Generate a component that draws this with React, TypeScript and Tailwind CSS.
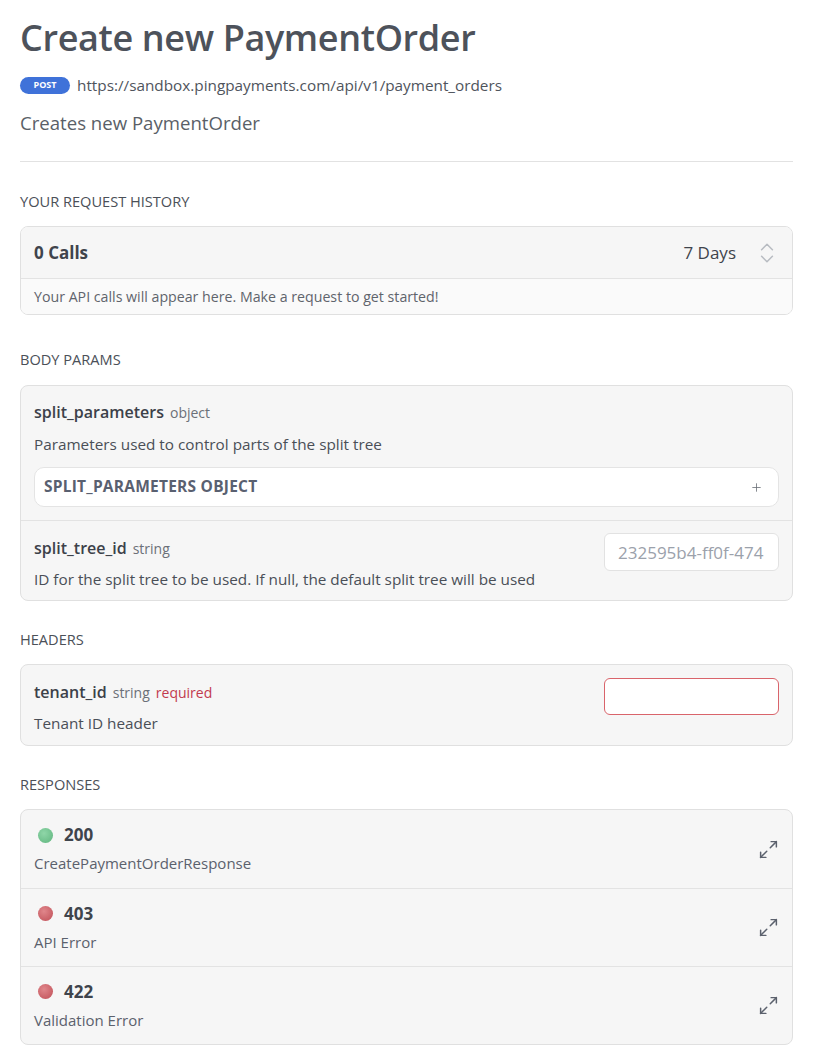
import { ChevronsUpDown, Maximize2, Plus } from 'lucide-react'

const RESPONSES = [
  { code: '200', label: 'CreatePaymentOrderResponse', ok: true },
  { code: '403', label: 'API Error', ok: false },
  { code: '422', label: 'Validation Error', ok: false },
]

function SectionTitle({ children }: { children: string }) {
  return <h2 className="text-[14.6px] leading-[20px] font-medium uppercase text-[#4b5058]">{children}</h2>
}

export default function App() {
  return (
    <div className="ml-5 w-[773px] pt-[14px] pb-4 font-['Open_Sans',sans-serif] text-[#3e434b]">
      {/* Heading */}
      <h1 className="text-[36px] font-semibold leading-[48px] tracking-[-0.01em] text-[#4d525b]">Create new PaymentOrder</h1>
      <div className="mt-[12px] flex items-center gap-[7px]">
        <span className="flex h-[17px] w-[50px] items-center justify-center rounded-full bg-[#3f72d9] text-[9px] font-bold text-white">
          POST
        </span>
        <span className="text-[15.3px] leading-[22px] text-[#4f545c]">https://sandbox.pingpayments.com/api/v1/payment_orders</span>
      </div>
      <p className="mt-[14px] text-[18.6px] leading-[26px] text-[#5a5f67]">Creates new PaymentOrder</p>
      <hr className="mt-[25px] border-[#e2e2e2]" />

      {/* Request history */}
      <div className="mt-[29px]">
        <SectionTitle>Your Request History</SectionTitle>
        <div className="mt-[15px] overflow-hidden rounded-lg border border-[#e0e0e0]">
          <div className="flex h-[51px] items-center justify-between bg-[#f6f6f6] pl-[13px] pr-[12px]">
            <span className="text-[17px] font-bold text-[#3f444c]">0 Calls</span>
            <div className="flex items-center gap-[18px]">
              <span className="text-[17px] text-[#3f444c]">7 Days</span>
              <ChevronsUpDown size={26} strokeWidth={1.4} className="text-[#b8bcc2]" />
            </div>
          </div>
          <div className="flex h-[36px] items-center border-t border-[#e3e3e3] bg-[#fafafa] px-[13px] text-[14.2px] text-[#5f646c]">
            Your API calls will appear here. Make a request to get started!
          </div>
        </div>
      </div>

      {/* Body params */}
      <div className="mt-[34px]">
        <SectionTitle>Body Params</SectionTitle>
        <div className="mt-[16px] overflow-hidden rounded-lg border border-[#e0e0e0] bg-[#f6f6f6]">
          <div className="px-[13px] pt-[15px] pb-[13px]">
            <div className="flex items-baseline gap-[6px] leading-[22px]">
              <span className="text-[16px] font-semibold text-[#3c4149]">split_parameters</span>
              <span className="text-[14px] text-[#6b7078]">object</span>
            </div>
            <p className="mt-[9px] text-[15.3px] leading-[22px] text-[#4a4f57]">Parameters used to control parts of the split tree</p>
            <div className="mt-[12px] flex h-[40px] items-center justify-between rounded-[10px] border border-[#e4e4e4] bg-white pl-[9px] pr-[15px]">
              <span className="text-[15.5px] font-bold uppercase tracking-[0.015em] text-[#596070]">split_parameters object</span>
              <Plus size={13} strokeWidth={1.5} className="text-[#6b7078]" />
            </div>
          </div>
          <div className="flex items-start justify-between border-t border-[#e3e3e3] pt-[12px] pb-[10px] pl-[13px] pr-[13px]">
            <div className="pt-[4px]">
              <div className="flex items-baseline gap-[6px] leading-[22px]">
                <span className="text-[16px] font-semibold text-[#3c4149]">split_tree_id</span>
                <span className="text-[14px] text-[#6b7078]">string</span>
              </div>
              <p className="mt-[8px] text-[15.3px] leading-[22px] text-[#4a4f57]">ID for the split tree to be used. If null, the default split tree will be used</p>
            </div>
            <input
              readOnly
              placeholder="232595b4-ff0f-474"
              className="h-[38px] w-[175px] rounded-md border border-[#e2e2e2] bg-white pl-[13px] pr-[2px] text-[17px] text-[#3c4149] placeholder:text-[#9ba1ab] focus:outline-none"
            />
          </div>
        </div>
      </div>

      {/* Headers */}
      <div className="mt-[28px]">
        <SectionTitle>Headers</SectionTitle>
        <div className="mt-[15px] flex items-start justify-between rounded-lg border border-[#e0e0e0] bg-[#f6f6f6] pt-[13px] pb-[11px] pl-[13px] pr-[13px]">
          <div className="pt-[3px]">
            <div className="flex items-baseline gap-[6px] leading-[22px]">
              <span className="text-[16px] font-semibold text-[#3c4149]">tenant_id</span>
              <span className="text-[14px] text-[#6b7078]">string</span>
              <span className="text-[14px] text-[#c23a4e]">required</span>
            </div>
            <p className="mt-[8px] text-[15.3px] leading-[22px] text-[#4a4f57]">Tenant ID header</p>
          </div>
          <input
            readOnly
            className="h-[37px] w-[175px] rounded-md border border-[#d9646b] bg-white px-[13px] text-[16px] focus:outline-none"
          />
        </div>
      </div>

      {/* Responses */}
      <div className="mt-[28px]">
        <SectionTitle>Responses</SectionTitle>
        <div className="mt-[15px] overflow-hidden rounded-lg border border-[#e0e0e0] bg-[#f6f6f6]">
          {RESPONSES.map((r, i) => (
            <div
              key={r.code}
              className={`flex h-[78px] items-center justify-between pl-[17px] pr-[13px] ${i > 0 ? 'border-t border-[#e3e3e3]' : ''}`}
            >
              <div>
                <div className="flex items-center gap-[11px] leading-[22px]">
                  <span
                    className={`h-[15px] w-[15px] rounded-full ${
                      r.ok
                        ? 'bg-[radial-gradient(circle_at_40%_35%,#8fd6a8,#5fb57e)]'
                        : 'bg-[radial-gradient(circle_at_40%_35%,#e0868b,#bf4e56)]'
                    }`}
                  />
                  <span className="text-[17px] font-bold text-[#3f444c]">{r.code}</span>
                </div>
                <p className="mt-[6px] -ml-[4px] text-[15px] leading-[22px] text-[#5b616d]">{r.label}</p>
              </div>
              <Maximize2 size={21} strokeWidth={1.7} className="text-[#5b616d]" />
            </div>
          ))}
        </div>
      </div>
    </div>
  )
}
